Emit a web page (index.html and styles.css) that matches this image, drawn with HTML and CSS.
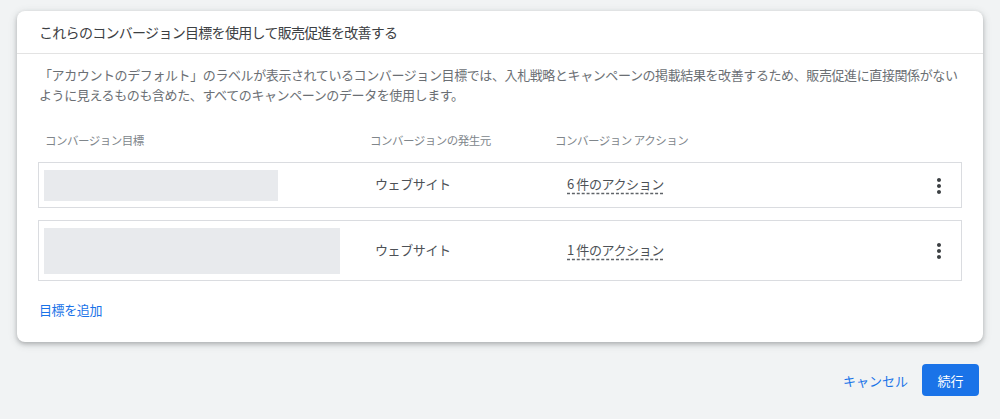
FILE: index.html
```html
<!DOCTYPE html>
<html lang="ja">
<head>
    <meta charset="UTF-8">
    <meta name="viewport" content="width=device-width, initial-scale=1.0">
    <title>コンバージョン目標</title>
    <link rel="stylesheet" href="styles.css">
</head>
<body>
    <main>
        <!-- Tarjeta de objetivos -->
        <section class="card">
            <div class="card-header">これらのコンバージョン目標を使用して販売促進を改善する</div>
            <div class="card-body">
                <p class="description">「アカウントのデフォルト」のラベルが表示されているコンバージョン目標では、入札戦略とキャンペーンの掲載結果を改善するため、販売促進に直接関係がないように見えるものも含めた、すべてのキャンペーンのデータを使用します。</p>

                <div class="goal-head">
                    <div class="col-goal">コンバージョン目標</div>
                    <div class="col-source">コンバージョンの発生元</div>
                    <div>コンバージョン アクション</div>
                </div>

                <div class="goal-row">
                    <div class="col-goal"><div class="placeholder small"></div></div>
                    <div class="col-source">ウェブサイト</div>
                    <div class="col-action"><span class="actions">6&nbsp;件のアクション</span></div>
                    <button class="menu-btn" aria-label="メニュー">
                        <svg viewBox="0 0 24 24" width="24" height="24"><path d="M12 8c1.1 0 2-.9 2-2s-.9-2-2-2-2 .9-2 2 .9 2 2 2zm0 2c-1.1 0-2 .9-2 2s.9 2 2 2 2-.9 2-2-.9-2-2-2zm0 6c-1.1 0-2 .9-2 2s.9 2 2 2 2-.9 2-2-.9-2-2-2z"/></svg>
                    </button>
                </div>

                <div class="goal-row">
                    <div class="col-goal"><div class="placeholder large"></div></div>
                    <div class="col-source">ウェブサイト</div>
                    <div class="col-action"><span class="actions">1&nbsp;件のアクション</span></div>
                    <button class="menu-btn" aria-label="メニュー">
                        <svg viewBox="0 0 24 24" width="24" height="24"><path d="M12 8c1.1 0 2-.9 2-2s-.9-2-2-2-2 .9-2 2 .9 2 2 2zm0 2c-1.1 0-2 .9-2 2s.9 2 2 2 2-.9 2-2-.9-2-2-2zm0 6c-1.1 0-2 .9-2 2s.9 2 2 2 2-.9 2-2-.9-2-2-2z"/></svg>
                    </button>
                </div>

                <a class="add-goal" href="#">目標を追加</a>
            </div>
        </section>

        <!-- Botones -->
        <div class="actions-bar">
            <button class="btn-text">キャンセル</button>
            <button class="btn-primary">続行</button>
        </div>
    </main>
</body>
</html>
```

FILE: styles.css
```css
/* Reset */
* {
    box-sizing: border-box;
    margin: 0;
    padding: 0;
}

body {
    font-family: 'Noto Sans CJK JP', 'Noto Sans', sans-serif;
    background-color: #f1f3f4;
    color: #4d5156;
    font-size: 13px;
}

main {
    padding: 11px 17px 0;
}

/* Card */
.card {
    background-color: #fff;
    border-radius: 8px;
    box-shadow: 0 2px 4px rgba(60, 64, 67, 0.3), 0 2px 8px 1px rgba(60, 64, 67, 0.12);
}

.card-header {
    height: 43px;
    padding: 0 22px;
    display: flex;
    align-items: center;
    font-size: 14px;
    letter-spacing: -0.7px;
    color: #3c4043;
    border-bottom: 1px solid #e3e3e3;
}

.card-body {
    padding: 11px 21px 23px;
}

.description {
    padding-left: 1px;
    line-height: 20px;
    letter-spacing: -0.4px;
    color: #6b6f74;
}

/* Goal table */
.goal-head {
    display: flex;
    margin-top: 26px;
    margin-bottom: 13px;
    padding-left: 7px;
    line-height: 18px;
    font-size: 11.5px;
    letter-spacing: -0.5px;
    color: #80868b;
}

.goal-head .col-goal {
    width: 325px;
}

.goal-head .col-source {
    width: 185px;
}

.goal-row {
    display: flex;
    align-items: center;
    border: 1px solid #dadce0;
    padding: 7px 10px 6px 5px;
    margin-bottom: 12px;
    letter-spacing: -0.4px;
    line-height: 16px;
}

.goal-row .col-goal {
    width: 331px;
}

.goal-row .col-source {
    width: 192px;
    margin-bottom: 3px;
}

.col-action {
    flex: 1;
    margin-bottom: 3px;
}

.placeholder {
    background-color: #e8eaed;
}

.placeholder.small {
    width: 234px;
    height: 31px;
}

.placeholder.large {
    width: 296px;
    height: 46px;
}

.actions {
    text-decoration: underline dashed #5f6368;
    text-underline-offset: 4px;
}

.menu-btn {
    background: none;
    border: none;
    width: 24px;
    height: 24px;
    display: flex;
    cursor: pointer;
}

.menu-btn svg {
    fill: #3c4043;
}

.add-goal {
    display: inline-block;
    margin-top: 8px;
    margin-left: 1px;
    line-height: 18px;
    color: #1a73e8;
    text-decoration: none;
    letter-spacing: -0.4px;
}

/* Bottom buttons */
.actions-bar {
    display: flex;
    justify-content: flex-end;
    align-items: center;
    gap: 6px;
    margin-top: 22px;
    margin-right: 4px;
}

.btn-text,
.btn-primary {
    font-family: inherit;
    font-size: 13px;
    border: none;
    border-radius: 4px;
    height: 32px;
    cursor: pointer;
}

.btn-text {
    background: none;
    color: #1a73e8;
    padding: 0 8px;
}

.btn-primary {
    background-color: #1a73e8;
    color: #fff;
    width: 57px;
}
```
